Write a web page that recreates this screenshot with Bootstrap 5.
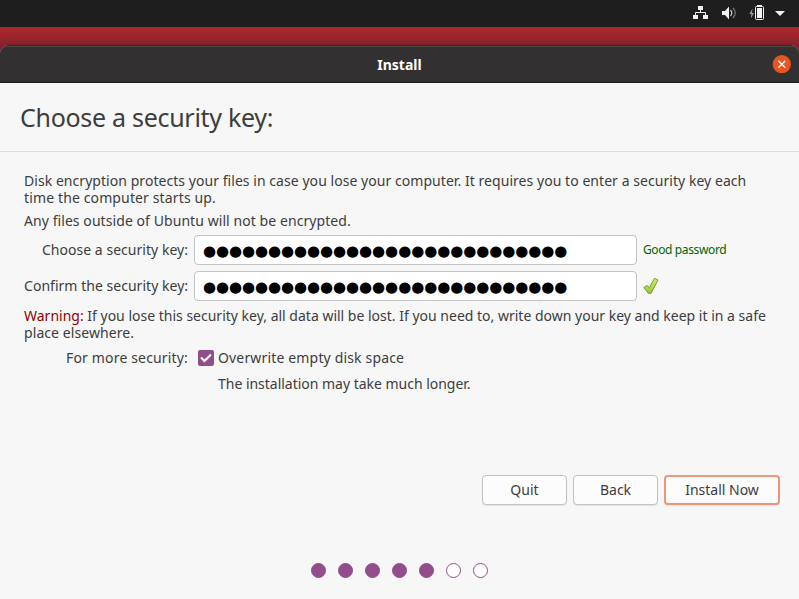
<!DOCTYPE html>
<html lang="en">
<head>
<meta charset="utf-8">
<meta name="viewport" content="width=device-width, initial-scale=1">
<title>Install</title>
<link href="https://cdn.jsdelivr.net/npm/bootstrap@5.3.0/dist/css/bootstrap.min.css" rel="stylesheet">
<style>
body{font-family:"Noto Sans","Open Sans",sans-serif;font-size:14px;line-height:17px;color:#3d3d3d;height:599px;overflow:hidden;background:#84202b}
.topbar{height:27px;background:#1e1e1e}
.desktop{height:572px;padding-top:18px;background:linear-gradient(#aa282d 0,#a0262c 7px,#86212b 18px,#6c1c27 24px)}
.win{height:554px;background:#f7f7f7;border-radius:8px 8px 0 0;box-shadow:0 0 2px rgba(40,0,0,.4)}
.titlebar{height:38px;background:#333031;border-top:1px solid #5b1c23;border-bottom:1px solid #1d1b1c;border-radius:8px 8px 0 0;box-shadow:inset 0 1px #464844;padding-right:8px}
.titlebar .caption{flex:1;padding-left:27px;text-align:center;color:#fff;font-weight:700;font-size:14px}
.titlebar svg,.topbar svg{display:block}
.heading{height:69px;border-bottom:1px solid #dcdcdc;padding-left:20px}
.heading h1{font-size:25px;line-height:30px;letter-spacing:-.29px}
.content{padding:20px 24px 0}
.content p{white-space:nowrap}
.lab{width:164px;text-align:right;white-space:nowrap}
.key-row .lab{padding-bottom:2px}
.key{width:443px;height:30px;margin-left:6px;padding:1px 8px 0;border:1px solid #c3c3c3;border-radius:4px;color:#000;font-family:"DejaVu Sans",sans-serif;font-size:15px;line-height:28px;letter-spacing:-.08px}
.good{color:#006400;font-size:12px;letter-spacing:-.38px;margin-left:6px;padding-bottom:2px}
.warn{color:#940000}
.key-row{height:30px;margin-bottom:6px}
.tick{margin-left:5px}
.files-note{margin:6px 0;letter-spacing:.07px}
.check-icon{margin:0 4px 0 10px}
.longer{margin:9px 0 0 194px;letter-spacing:-.02px}
.actions{margin:83px 19px 0 0;gap:6px}
.actions .btn{height:30px;width:85px;padding:0;font-size:14px;line-height:28px;color:#3d3d3d;background:#fcfcfc;border:1px solid #c3c3c3;border-radius:4px;box-shadow:0 1px 1px rgba(0,0,0,.08)}
.actions .go{width:116px;border:2px solid #ec977c;line-height:26px}
.steps{gap:12px;margin-top:58px}
.steps span{width:15px;height:15px;border-radius:50%;border:1px solid #924d8b;background:#fff}
.steps .done{background:#924d8b}
.l1{letter-spacing:.05px}
.l2{letter-spacing:.13px}
.l4{letter-spacing:.03px}
.l7{letter-spacing:.08px}
.l8{letter-spacing:.16px}
</style>
<script src="https://cdn.jsdelivr.net/npm/bootstrap@5.3.0/dist/js/bootstrap.bundle.min.js"></script>
</head>
<body>
<header class="topbar d-flex justify-content-end">
<svg width="119" height="27" viewBox="0 0 119 27" fill="#f2f2f2">
<path d="M18 6h5v4h-5zM13 15h5v4h-5zM23 15h5v4h-5z"/><path d="M20.5 10v2.5M15.5 15v-2.5h10V15" fill="none" stroke="#f2f2f2" stroke-width="1"/>
<path d="M42 11h3l4-4.5v13L45 15h-3z"/><path d="M50.5 10q2.500 3 0 6" fill="none" stroke="#d0d0d0" stroke-width="1.2"/><path d="M53 8q4.500 5 0 10" fill="none" stroke="#777" stroke-width="1.2"/>
<path d="M72.500 8.500L69.300 14h2l-.5 4.500 3.200-5.500h-2z" fill="#999"/>
<path d="M77 5h5v2h-5z"/><rect x="75.500" y="6.500" width="8" height="13" rx="1" fill="none" stroke="#f2f2f2"/><path d="M77 8h5v10h-5z"/>
<path d="M95 11h10l-5 5z"/>
</svg>
</header>
<div class="desktop">
<main class="win">
<div class="titlebar d-flex align-items-center">
<div class="caption">Install</div>
<svg width="19" height="19" viewBox="0 0 19 19" role="img" aria-label="Close"><circle cx="9.800" cy="9.200" r="9.100" fill="#e95420"/><path d="M6.300 5.700l7 7M13.300 5.700l-7 7" stroke="#fff" stroke-width="1.400"/></svg>
</div>
<div class="heading d-flex align-items-center"><h1 class="m-0 fw-normal">Choose a security key:</h1></div>
<div class="content">
<p class="m-0"><span class="l1">Disk encryption protects your files in case you lose your computer. It requires you to enter a security key each</span><br><span class="l2">time the computer starts up.</span></p>
<p class="files-note">Any files outside of Ubuntu will not be encrypted.</p>
<div class="key-row d-flex align-items-center"><label class="lab l4" for="k1">Choose a security key:</label><input class="key" id="k1" value="●●●●●●●●●●●●●●●●●●●●●●●●●●●●"><span class="good">Good password</span></div>
<div class="key-row d-flex align-items-center"><label class="lab l4" for="k2">Confirm the security key:</label><input class="key" id="k2" value="●●●●●●●●●●●●●●●●●●●●●●●●●●●●">
<svg class="tick" width="18" height="18" viewBox="0 0 18 18"><defs><linearGradient id="g" x2="0" y2="1"><stop stop-color="#d9ee62"/><stop offset="1" stop-color="#9cc72f"/></linearGradient></defs><path d="M1.800 10.500l3.200-2 2.300 2.200L12.500 1.300l3.500 1.600-6.800 13.300-2.800.2z" fill="url(#g)" stroke="#6f9c4b" stroke-width="1" stroke-linejoin="round"/></svg></div>
<p class="m-0"><span><span class="warn">Warning:</span> If you lose this security key, all data will be lost. If you need to, write down your key and keep it in a safe</span><br><span class="l7">place elsewhere.</span></p>
<div class="d-flex align-items-center mt-2"><span class="lab l8">For more security:</span>
<svg class="check-icon" width="16" height="16" viewBox="0 0 16 16"><rect width="16" height="16" rx="2" fill="#924d8b"/><path d="M3 7.500l3.500 3.500L13 4.500" fill="none" stroke="#fff" stroke-width="2"/></svg>
<span class="l8">Overwrite empty disk space</span></div>
<p class="longer">The installation may take much longer.</p>
</div>
<div class="actions d-flex justify-content-end"><button class="btn">Quit</button><button class="btn">Back</button><button class="btn go">Install Now</button></div>
<div class="steps d-flex justify-content-center"><span class="done"></span><span class="done"></span><span class="done"></span><span class="done"></span><span class="done"></span><span></span><span></span></div>
</main>
</div>
</body>
</html>
